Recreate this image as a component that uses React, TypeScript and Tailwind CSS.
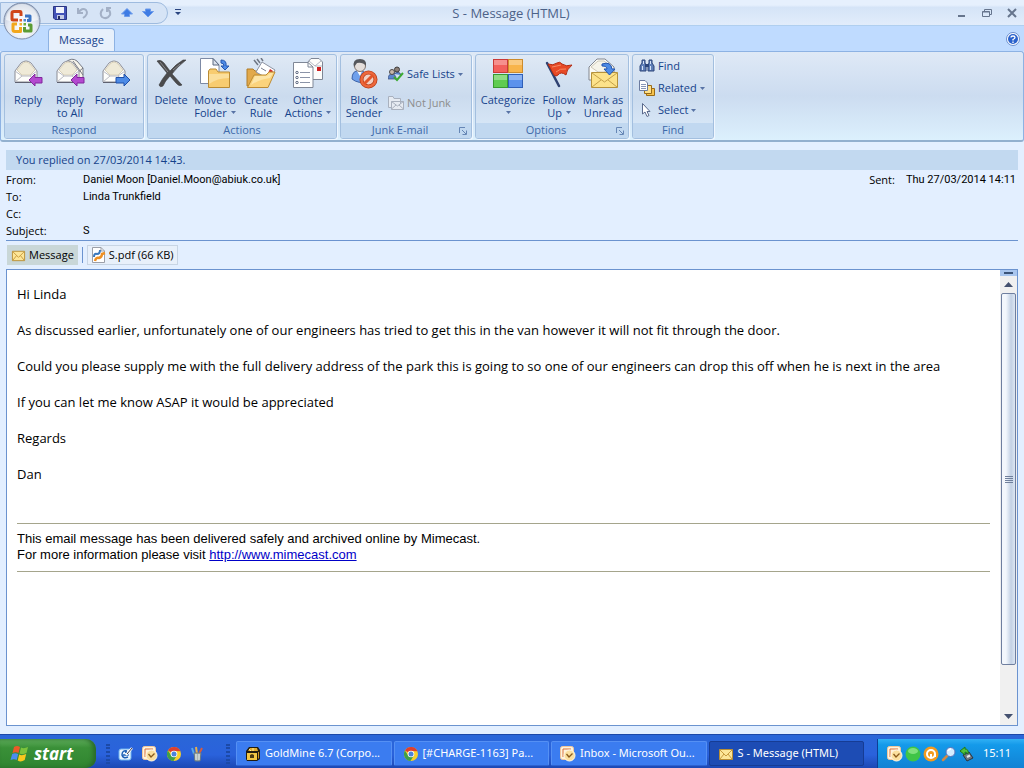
import type { ReactNode } from 'react';

const uiFont = "font-['Open_Sans','Noto_Sans',sans-serif]";

type IconProps = { size?: number };

/* ---------- Ribbon icons (32px) ---------- */

function OpenEnvelope() {
  return (
    <>
      <path d="M3 13 L9 5 Q14 1 19 5 L25 13 V24 H3Z" fill="#fdfdfb" stroke="#8b8c94" />
      <path d="M5 12 L10 6 Q14 2 18 6 L23 12 L18 17 H10Z" fill="#efead8" stroke="#d8d0b8" />
      <path d="M3 13 L10 18 H18 L25 13 M3 24 L10 18 M25 24 L18 18" fill="none" stroke="#b9bac2" />
      <path d="M3 24.500H25" stroke="#5e6170" />
    </>
  );
}

function LeftArrow() {
  return <path d="M17 22 L23 16 V19.500 H30 V25 H23 V28Z" fill="#b44ad0" stroke="#80279c" />;
}

function ReplyIcon() {
  return (
    <svg width="32" height="32" viewBox="0 0 32 32">
      <OpenEnvelope />
      <LeftArrow />
    </svg>
  );
}

function ReplyAllIcon() {
  return (
    <svg width="32" height="32" viewBox="0 0 32 32">
      <path d="M12 4 Q18 -1 23 3 L29 10 V22 H14Z" fill="#f7f4ea" stroke="#777a84" />
      <path d="M19 3 L29 17 M29 10 L22 16" stroke="#777a84" fill="none" />
      <OpenEnvelope />
      <LeftArrow />
    </svg>
  );
}

function ForwardIcon() {
  return (
    <svg width="32" height="32" viewBox="0 0 32 32">
      <OpenEnvelope />
      <path d="M30 22 L24 16 V19.500 H16 V25 H24 V28Z" fill="#4d8be6" stroke="#1f4fa8" />
    </svg>
  );
}

function DeleteIcon() {
  return (
    <svg width="32" height="32" viewBox="0 0 32 32">
      <path d="M2 3 Q6 1 9 5 L15 13 Q21 6 28 2 L31 2 Q22 9 17 16 L27 27 Q24 29 21 25 L15 18 Q10 23 8 28 Q5 30 4 27 Q7 21 12 15 L7 9Z" fill="#4b4b4d" stroke="#3a3a3c" strokeWidth=".6" />
      <path d="M5 4 L13 14 M18 12 L25 6" stroke="#8a8a8d" />
    </svg>
  );
}

function MoveIcon() {
  return (
    <svg width="32" height="32" viewBox="0 0 32 32">
      <path d="M1.500 .5 H14 L20 7 V25.500 H1.500Z" fill="#fff" stroke="#7d8aa5" />
      <path d="M14 .5 V7 H20Z" fill="#dbe2ee" stroke="#5b6880" />
      <path d="M9.500 13 L11 11 H17 L19 14 H30.500 V29.500 H9.500Z" fill="#f8cc70" stroke="#b98b34" />
      <path d="M10 16 H30 V20 Q18 20 10 26Z" fill="#fbdf9c" />
      <path d="M22 2 Q28 2 27 8 H30 L26 12 L22 8 H25 Q25 5 22 5Z" fill="#4d8be6" stroke="#2457b0" />
    </svg>
  );
}

function RuleIcon() {
  return (
    <svg width="32" height="32" viewBox="0 0 32 32">
      <path d="M9 2 L13 7 M12 1 L15 5 M16 0 L18 3" stroke="#6f7684" strokeWidth="1.500" />
      <path d="M2 11 H8 L10 13 H16 V28 H2Z" fill="#e2a94b" stroke="#b07c28" />
      <path d="M17 4 L30 12 L25 22 L11 14Z" fill="#fff" stroke="#8d93a3" />
      <path d="M16 10 L21 13" stroke="#7a8193" />
      <path d="M25 11 l3 2 -1.500 3 -3 -2Z" fill="#cf2a2a" />
      <path d="M9 17 H21 L24 14 H30 L23 29.500 H2.500Z" fill="#fbd37c" stroke="#bc8b35" />
      <path d="M10 18 H22 L25 15 H28 L25 20 Q15 21 6 27Z" fill="#fde5a8" />
    </svg>
  );
}

function OtherIcon() {
  return (
    <svg width="32" height="32" viewBox="0 0 32 32">
      <path d="M15 5 L19 .5 H27 L30.500 4 V21.500 H15Z" fill="#fdfdfb" stroke="#7f8796" />
      <path d="M17 3 L23 8 L29 3 M23 8 H30" fill="none" stroke="#b4b9c4" />
      <path d="M25 9 h4 v4 h-4Z" fill="#cf2020" />
      <path d="M1.500 4.500 H16 L21 9 V29.500 H1.500Z" fill="#fff" stroke="#7f8796" />
      <path d="M16 4.500 V9 H21" fill="none" stroke="#7f8796" />
      <path d="M8 14.500H18 M8 19.500H18 M8 24.500H18" stroke="#8b94a8" />
      <g fill="#fff" stroke="#5d6880">
        <circle cx="5" cy="14.500" r="1.200" />
        <circle cx="5" cy="19.500" r="1.200" />
        <circle cx="5" cy="24.500" r="1.200" />
      </g>
    </svg>
  );
}

function BlockIcon() {
  return (
    <svg width="32" height="32" viewBox="0 0 32 32">
      <path d="M4 21 Q4 12 11 13 Q20 12 20 24 Q10 26 4 21Z" fill="#6fa0ec" stroke="#3d63a8" />
      <path d="M9 13 L12 18 L14 13Z" fill="#fff" />
      <circle cx="12" cy="8" r="5.500" fill="#e4dedb" stroke="#82746c" />
      <path d="M6 9 Q4 1 12 1 Q19 1 18 8 Q15 4 9 5Z" fill="#55575c" />
      <circle cx="20.500" cy="21.500" r="7" fill="#f3cfc2" stroke="#b53d18" strokeWidth="4" />
      <circle cx="20.500" cy="21.500" r="7" fill="none" stroke="#ee683c" strokeWidth="2.500" />
      <path d="M16 26 L25 17" stroke="#e2552a" strokeWidth="3" />
    </svg>
  );
}

function CategorizeIcon() {
  return (
    <svg width="32" height="32" viewBox="0 0 32 32">
      <rect x="1.500" y="1.500" width="14" height="13" fill="#f2605c" stroke="#c93a38" />
      <rect x="16.500" y="1.500" width="14" height="13" fill="#f8b44a" stroke="#cc8b2c" />
      <rect x="1.500" y="16.500" width="14" height="13" fill="#5fcc50" stroke="#389a30" />
      <rect x="16.500" y="16.500" width="14" height="13" fill="#5c92ec" stroke="#2f5fb8" />
      <path d="M2 2H15V7H2Z M17 2H30V7H17Z M2 17H15V22H2Z M17 17H30V22H17Z" fill="#fff" opacity=".3" />
    </svg>
  );
}

function FlagIcon() {
  return (
    <svg width="32" height="32" viewBox="0 0 32 32">
      <path d="M4 5 L16 28" stroke="#2f4272" strokeWidth="2.500" strokeLinecap="round" />
      <path d="M5 6 Q10 8 14 5 Q17 3 19 6 Q23 9 29 7 Q23 12 23 17 Q18 13 15 17 Q13 19 11 17Z" fill="#e84a26" stroke="#b32c12" />
      <path d="M9 9 Q14 8 18 7 M13 14 Q17 10 23 11" fill="none" stroke="#f58b66" />
    </svg>
  );
}

function UnreadIcon() {
  return (
    <svg width="32" height="32" viewBox="0 0 32 32">
      <path d="M2 9 L10 1 H18 L27 9 V22 H2Z" fill="#fbfbf6" stroke="#82868f" />
      <path d="M4 9 L11 3 H17 L25 9 L17 14 H11Z" fill="#f6f4ea" stroke="#cfc9b8" />
      <path d="M4.500 14.500 H30.500 V29.500 H4.500Z" fill="#fce28a" stroke="#b5923c" />
      <path d="M5 15 L17.500 24 L30 15 M5 29 L14 22 M30 29 L21 22" fill="none" stroke="#c4a14a" />
      <path d="M15 6 Q24 3 25 11 H28 L22.500 17 L17 11 H20 Q20 8 15 8Z" fill="#4d8be6" stroke="#2355b0" />
    </svg>
  );
}

/* ---------- Small icons (16px) ---------- */

function SafeIcon() {
  return (
    <svg width="16" height="16" viewBox="0 0 16 16">
      <path d="M0 13 Q0 8 4 8 Q8 8 8 13Z" fill="#5b86cf" stroke="#3b4e78" strokeWidth=".7" />
      <circle cx="4" cy="6" r="2.500" fill="#c9b8ac" stroke="#4d4a4a" />
      <circle cx="9" cy="3.500" r="2.500" fill="#8d8078" stroke="#3f3d3d" />
      <path d="M6 8 Q11 4 13 9" fill="#5b86cf" stroke="#3b4e78" />
      <path d="M6 11 L9 14 L15 7" fill="none" stroke="#3caa33" strokeWidth="2" />
    </svg>
  );
}

function NotJunkIcon() {
  return (
    <svg width="16" height="16" viewBox="0 0 16 16" fill="#e6ebf2" stroke="#a9b1be">
      <path d="M.5 12.500 V1.500 H5 L6 3.500 H12.500 V12.500Z" />
      <path d="M3.500 6.500 H15.500 V14.500 H3.500Z M3.500 6.500 L9.500 11 L15.500 6.500 M3.500 14 L8 10 M15.500 14 L11 10" />
    </svg>
  );
}

function FindIcon() {
  return (
    <svg width="16" height="16" viewBox="0 0 16 16">
      <path d="M3 2 H6 V5 L7 7 V13 H1 V8 L3 5Z M10 2 H13 V5 L15 8 V13 H9 V7 L10 5Z" fill="#5f7fb8" stroke="#2c4478" />
      <path d="M6 6 H10 V9 H6Z" fill="#2c467c" />
      <path d="M3.500 8 V12 M11.500 8 V12 M4.500 3 V6 M11.500 3 V6" stroke="#d5e2f7" />
    </svg>
  );
}

function RelatedIcon() {
  return (
    <svg width="16" height="16" viewBox="0 0 16 16">
      <path d="M7.500 8.500 H15.500 V15.500 H7.500Z" fill="#f6c24c" stroke="#9a6b16" />
      <path d="M5.500 5.500 H12.500 V13.500 H5.500Z" fill="#fde08c" stroke="#9a6b16" />
      <path d="M.5 .5 H6 L8.500 3 V10.500 H.5Z" fill="#fff" stroke="#6b7ba0" />
      <path d="M2 4.500H7 M2 6.500H7 M2 8.500H7" stroke="#8796b8" />
    </svg>
  );
}

function CursorIcon() {
  return (
    <svg width="16" height="16" viewBox="0 0 16 16">
      <path d="M3.500 1.500 V12 L6 10 L8 14.500 L10 13.500 L8 9.500 H11Z" fill="#fff" stroke="#5a6a8c" />
    </svg>
  );
}

function MailIcon({ size = 16 }: IconProps) {
  return (
    <svg width={size} height={size} viewBox="0 0 16 16">
      <path d="M1.500 3.500 H14.500 V13.500 H1.500Z" fill="#fde698" stroke="#b98e35" />
      <path d="M2 4 L8 10 L14 4 M2 13 L6 8 M14 13 L10 8" fill="none" stroke="#c79b3e" />
    </svg>
  );
}

function PdfIcon() {
  return (
    <svg width="16" height="16" viewBox="0 0 16 16">
      <path d="M1.500 .5 H10 L13.500 4 V15.500 H1.500Z" fill="#fff" stroke="#9b9fa8" />
      <path d="M10 .5 V4 H13.500" fill="none" stroke="#9b9fa8" />
      <path d="M3 10 Q3 6 6 7 Q9 7 9 3" fill="none" stroke="#3b78bd" strokeWidth="2" />
      <path d="M4 14 Q5 10 8 11 Q11 10 11 7 L14 6" fill="none" stroke="#ee8f22" strokeWidth="2.500" />
    </svg>
  );
}

function OutlookIcon() {
  return (
    <svg width="16" height="16" viewBox="0 0 16 16">
      <rect x=".5" y=".5" width="13" height="13" rx="2" fill="#fff3dc" stroke="#f3c79a" />
      <path d="M3 11 V3 H11" fill="none" stroke="#d9713c" />
      <circle cx="9.500" cy="9.500" r="5.500" fill="#fbdf9e" stroke="#fff7e6" />
      <path d="M6.500 8 L9 11 L12.500 7.500" fill="none" stroke="#8a5a1c" strokeWidth="1.300" />
    </svg>
  );
}

function ChromeIcon() {
  return (
    <svg width="16" height="16" viewBox="0 0 16 16">
      <circle cx="8" cy="8" r="7" fill="#f7cf2e" />
      <path d="M8 8 L2 4.400 A7 7 0 0 1 14.500 5.200 L8 5Z" fill="#dd4030" />
      <path d="M1.900 4.500 A7 7 0 0 0 7.500 15 L10.500 10 L5.500 10Z" fill="#3f9f48" />
      <circle cx="8" cy="8" r="3.300" fill="#fff" />
      <circle cx="8" cy="8" r="2.500" fill="#4a83dc" />
    </svg>
  );
}

function ShowDesktopIcon() {
  return (
    <svg width="16" height="16" viewBox="0 0 16 16">
      <rect x="1" y="3" width="12" height="11" rx="2" fill="#e9f5ff" stroke="#6db2ee" />
      <path d="M9 5 Q4 4 4 9 Q5 13 10 11 M5 9 H10 Q10 6 7 6" fill="none" stroke="#1c5fb5" strokeWidth="1.500" />
      <path d="M8 9 L14 2" stroke="#fff" strokeWidth="2.500" />
      <path d="M9 8 L14 2" stroke="#3c3c48" />
    </svg>
  );
}

function PencilsIcon() {
  return (
    <svg width="16" height="16" viewBox="0 0 16 16">
      <path d="M4 8 L2 2" stroke="#57a8e8" strokeWidth="2" />
      <path d="M7 8 L6 1" stroke="#e8b04a" strokeWidth="2" />
      <path d="M9 8 L12 2" stroke="#d85c3c" strokeWidth="2" />
      <path d="M4 7 H11 L10 15 H5Z" fill="#aab4b4" stroke="#697a80" />
      <path d="M6 8 V14 M9 8 V14" stroke="#e5eded" />
    </svg>
  );
}

function GoldMineIcon() {
  return (
    <svg width="16" height="16" viewBox="0 0 16 16">
      <path d="M1 5 L4 1 H13 L15 4 V13 L12 15 H2 L1 13Z" fill="#221c10" />
      <path d="M3 5 L5 2 H12 L13 5Z" fill="#e0ad32" />
      <path d="M4 3 L6 5 M8 2 V5" stroke="#fff0a0" />
      <path d="M2 7 H12 V14 H2Z" fill="#f3c744" />
      <path d="M13 6 H14 V12 L13 13Z" fill="#c99426" />
      <path d="M5 12 V9 L7 8 L9 9 V12Z" fill="#4c3a12" />
    </svg>
  );
}

function AvastIcon() {
  return (
    <svg width="16" height="16" viewBox="0 0 16 16">
      <circle cx="8" cy="8" r="7.500" fill="#f39a1e" />
      <circle cx="8" cy="8" r="4" fill="none" stroke="#fff" strokeWidth="2" />
      <path d="M8 8 V12 M12 8 V11" stroke="#fff" strokeWidth="2" />
    </svg>
  );
}

function MagnifierIcon() {
  return (
    <svg width="16" height="16" viewBox="0 0 16 16">
      <path d="M6 10 L2 14" stroke="#cf8a48" strokeWidth="2.500" strokeLinecap="round" />
      <circle cx="9.500" cy="6" r="4.500" fill="#d5ecff" stroke="#5670b8" />
      <path d="M7 5 Q8 3 10 3" stroke="#fff" strokeWidth="1.500" fill="none" />
    </svg>
  );
}

function UsbIcon() {
  return (
    <svg width="16" height="16" viewBox="0 0 16 16">
      <path d="M4 9 L10 6 L14 12 L8 15Z" fill="#6d7680" stroke="#2d343c" />
      <path d="M8 11 L11 9.500" stroke="#e3e8ed" strokeWidth="2" />
      <path d="M1 5 L6 1 V3 Q10 3 9 8 Q7 6 6 6 V9Z" fill="#4fc23c" stroke="#1f7a1a" />
    </svg>
  );
}

function WindowsFlag() {
  return (
    <svg width="20" height="18" viewBox="0 0 20 18">
      <path d="M4 2 Q7 0 10 2 L8.500 8 Q6 6.500 2.500 8Z" fill="#ec5a28" />
      <path d="M11 2.500 Q14 4 18 2 L16.500 8 Q13 10 9.500 8.500Z" fill="#7cc33c" />
      <path d="M2.200 9 Q5 7.500 8.200 9 L6.700 15 Q4 13.500 .5 15Z" fill="#4a8df0" />
      <path d="M9.200 9.500 Q12 11 16.200 9 L14.700 15 Q11 17.500 7.700 15.500Z" fill="#f9c81e" />
    </svg>
  );
}

function OfficeLogo() {
  return (
    <svg width="38" height="38" viewBox="0 0 38 38">
      <defs>
        <radialGradient id="orb" cx="50%" cy="70%" r="65%">
          <stop offset="0" stopColor="#ffffff" />
          <stop offset=".6" stopColor="#e4e9f2" />
          <stop offset="1" stopColor="#b3bfd3" />
        </radialGradient>
      </defs>
      <circle cx="19" cy="19" r="18" fill="url(#orb)" stroke="#7d8ca8" />
      <path d="M3 18 A16 16 0 0 1 35 18 Q19 23 3 18Z" fill="#fff" opacity=".55" />
      <g fill="none" strokeWidth="3" strokeLinejoin="round">
        <path d="M15 18 H10 Q9 18 9 17 V11 Q9 9.500 11 9.500 H17 Q18 9.500 18 11 V14" stroke="#cf4519" />
        <path d="M22 14 H27 V18.500 H24" stroke="#3a74c4" />
        <path d="M14 22 H10 V28 Q10 29.500 12 29.500 H17.500 V25" stroke="#f2a71d" />
        <path d="M21.500 25 V29 H28 V23 H25" stroke="#5c9c34" />
      </g>
      <path d="M16.500 17h2.500v2.500h-2.500z" fill="#e2602c" />
      <path d="M20.500 17h2.500v2.500h-2.500z" fill="#4c85d0" />
      <path d="M16.500 21h2.500v2.500h-2.500z" fill="#f2b32d" />
      <path d="M20.500 21h2.500v2.500h-2.500z" fill="#6cae3c" />
    </svg>
  );
}

/* ---------- Building blocks ---------- */

function Caret() {
  return (
    <svg width="5" height="3" viewBox="0 0 5 3" className="inline-block shrink-0">
      <path d="M0 0H5L2.500 3Z" fill="#5873a5" />
    </svg>
  );
}

function BigButton({ icon, lines, caret, width }: { icon: ReactNode; lines: string[]; caret?: boolean; width: string }) {
  return (
    <button className={`${width} shrink-0 flex flex-col items-center pt-[3px] text-[11px] leading-[13px] text-[#15428b]`}>
      <span className="h-8 mb-[3px]">{icon}</span>
      {lines.map((line, i) => (
        <span key={i} className="h-[13px] flex items-center gap-1 whitespace-nowrap">
          {line}
          {caret && i === lines.length - 1 && <Caret />}
        </span>
      ))}
    </button>
  );
}

function SmallButton({ icon, label, caret, disabled }: { icon: ReactNode; label: string; caret?: boolean; disabled?: boolean }) {
  return (
    <button
      disabled={disabled}
      className="h-[22px] flex items-center gap-[3px] text-[11px] text-[#15428b] whitespace-nowrap disabled:text-[#8d8d8d]"
    >
      {icon}
      {label}
      {caret && <Caret />}
    </button>
  );
}

function Group({ title, launcher, children }: { title: string; launcher?: boolean; children: ReactNode }) {
  return (
    <section className="shrink-0 h-[85px] flex flex-col overflow-hidden rounded-[3px] border border-[#a3bfdf] bg-linear-to-b from-[#dfe9f5] via-[#cbdbee] to-[#dcebfa] shadow-[1px_1px_0_#f0f7ff]">
      <div className="flex-1 flex px-[3px]">{children}</div>
      <div className="h-[15px] flex items-center bg-[#c1d8f0] text-[11px] text-[#3e6aaa]">
        <h2 className="flex-1 text-center">{title}</h2>
        {launcher && (
          <button aria-label={`${title} settings`} className="pr-1">
            <svg width="8" height="8" viewBox="0 0 8 8" fill="none" stroke="#6686b5">
              <path d="M.5 6V.5H6 M3 3L7 7 M7.500 3.500V7.500H3.500" />
            </svg>
          </button>
        )}
      </div>
    </section>
  );
}

function TitleBar() {
  return (
    <header className="h-[26px] flex items-center bg-linear-to-b from-[#e6f0fd] from-20% via-[#d5e4f7] via-30% to-[#e2edfb] border-b border-[#b0cfef]">
      <div className="w-[168px] h-[22px] pl-[52px] pr-[13px] flex items-center justify-between rounded-r-full border border-[#9ebbdf] bg-[#d6e4f6]">
        <button aria-label="Save">
          <svg width="14" height="14" viewBox="0 0 14 14">
            <path d="M.5 .5H13.500V13.500H2L.5 12Z" fill="#4353b8" stroke="#2b3683" />
            <path d="M3 1H11V7H3Z" fill="#f1f4fc" />
            <path d="M4 9H11V13H4Z" fill="#c4cbe5" />
            <path d="M5 10H7V13H5Z" fill="#242c60" />
          </svg>
        </button>
        <button aria-label="Undo">
          <svg width="13" height="14" viewBox="0 0 13 14" fill="none" stroke="#a3b0c6" strokeWidth="2">
            <path d="M2 2V7H7 M2 7Q6 1 10 4Q13 8 7 12" />
          </svg>
        </button>
        <button aria-label="Redo">
          <svg width="13" height="14" viewBox="0 0 13 14" fill="none" stroke="#a3b0c6" strokeWidth="2">
            <path d="M8 2H12 M8 1V6 M8 3Q12 5 11 9Q8 14 3 11Q0 7 4 3" />
          </svg>
        </button>
        <button aria-label="Previous item">
          <svg width="12" height="10" viewBox="0 0 12 10">
            <path d="M6 .5L11.500 6H8.500V8.500H3.500V6H.5Z" fill="#3f7ce4" stroke="#6c9bea" />
          </svg>
        </button>
        <button aria-label="Next item">
          <svg width="12" height="10" viewBox="0 0 12 10">
            <path d="M6 9L.5 3.500H3.500V1H8.500V3.500H11.500Z" fill="#3f7ce4" stroke="#6c9bea" />
          </svg>
        </button>
      </div>
      <button aria-label="Customize toolbar" className="ml-[7px]">
        <svg width="6" height="7" viewBox="0 0 6 7" fill="#2a4580">
          <path d="M0 0H6V1H0Z M0 3H6L3 6Z" />
        </svg>
      </button>
      <h1 className="flex-1 pt-[2px] pr-[116px] text-center text-[13px] text-[#4c6288]">S - Message (HTML)</h1>
      <div className="flex items-center gap-[15px] pr-[7px]">
        <button aria-label="Minimize">
          <svg width="10" height="10" viewBox="0 0 10 10"><path d="M1 7H8V9H1Z" fill="#66758d" /></svg>
        </button>
        <button aria-label="Restore">
          <svg width="10" height="10" viewBox="0 0 10 10" fill="none" stroke="#66758d">
            <path d="M2.500 3V1.500H9.500V6.500H8 M.5 3.500H7.500V8.500H.5Z M.5 4H7.500" />
          </svg>
        </button>
        <button aria-label="Close">
          <svg width="10" height="10" viewBox="0 0 10 10"><path d="M1 1L9 9M9 1L1 9" stroke="#66758d" strokeWidth="2" /></svg>
        </button>
      </div>
    </header>
  );
}

function Ribbon() {
  return (
    <>
      <nav className="h-[25px] flex items-end justify-between bg-[#bfdbff] pl-12 pr-1">
        <button className="h-[23px] px-[10px] rounded-t-[4px] border border-b-0 border-[#8db2e3] bg-[#e7f0fb] text-[11px] text-[#15428b]">
          Message
        </button>
        <button aria-label="Help" className="self-center">
          <svg width="14" height="14" viewBox="0 0 14 14">
            <circle cx="7" cy="7" r="6.500" fill="#fff" stroke="#6b8fce" />
            <circle cx="7" cy="7" r="5" fill="#2a62cc" />
            <path d="M5 5.500Q5 4 7 4Q9 4 9 5.500Q9 6.500 7 7.500V8.500 M7 9.500V11" fill="none" stroke="#fff" strokeWidth="1.300" />
          </svg>
        </button>
      </nav>
      <div className="h-[91px] px-[3px] pt-[2px] flex gap-[3px] border border-b-2 border-[#8db2e3] border-b-[#92b0cf] rounded-[3px] bg-linear-to-b from-[#dfe9f6] via-[#ccdcf0] to-[#dcf0fd]">
        <Group title="Respond">
          <BigButton width="w-10" icon={<ReplyIcon />} lines={['Reply']} />
          <BigButton width="w-11" icon={<ReplyAllIcon />} lines={['Reply', 'to All']} />
          <BigButton width="w-12" icon={<ForwardIcon />} lines={['Forward']} />
        </Group>
        <Group title="Actions">
          <BigButton width="w-10" icon={<DeleteIcon />} lines={['Delete']} />
          <BigButton width="w-12" icon={<MoveIcon />} lines={['Move to', 'Folder']} caret />
          <BigButton width="w-11" icon={<RuleIcon />} lines={['Create', 'Rule']} />
          <BigButton width="w-[50px]" icon={<OtherIcon />} lines={['Other', 'Actions']} caret />
        </Group>
        <Group title="Junk E-mail" launcher>
          <BigButton width="w-10" icon={<BlockIcon />} lines={['Block', 'Sender']} />
          <div className="w-[84px] pl-1 pt-2 flex flex-col gap-[7px]">
            <SmallButton icon={<SafeIcon />} label="Safe Lists" caret />
            <SmallButton icon={<NotJunkIcon />} label="Not Junk" disabled />
          </div>
        </Group>
        <Group title="Options" launcher>
          <BigButton width="w-[58px]" icon={<CategorizeIcon />} lines={['Categorize', '']} caret />
          <BigButton width="w-11" icon={<FlagIcon />} lines={['Follow', 'Up']} caret />
          <BigButton width="w-11" icon={<UnreadIcon />} lines={['Mark as', 'Unread']} />
        </Group>
        <Group title="Find">
          <div className="w-[74px] pl-[3px] flex flex-col">
            <SmallButton icon={<FindIcon />} label="Find" />
            <SmallButton icon={<RelatedIcon />} label="Related" caret />
            <SmallButton icon={<CursorIcon />} label="Select" caret />
          </div>
        </Group>
      </div>
    </>
  );
}

const headers = [
  { label: 'From:', value: 'Daniel Moon [Daniel.Moon@abiuk.co.uk]' },
  { label: 'To:', value: 'Linda Trunkfield' },
  { label: 'Cc:', value: '' },
  { label: 'Subject:', value: 'S' },
];

function MessageHeader() {
  return (
    <div className="pt-2 px-[6px] text-[11px] text-black">
      <p className="h-5 px-[10px] flex items-center bg-[#c2d9f0] text-[#15428b]">You replied on 27/03/2014 14:43.</p>
      <div className="flex justify-between items-start pt-px pb-px border-b border-[#6b93cf]">
        <dl>
          {headers.map(({ label, value }) => (
            <div key={label} className="flex h-[17px] leading-[17px]">
              <dt className="w-[77px]">{label}</dt>
              <dd className="font-['Roboto','Noto_Sans',sans-serif]">{value}</dd>
            </div>
          ))}
        </dl>
        <dl className="flex gap-[11px] leading-[17px] pr-[2px]">
          <dt>Sent:</dt>
          <dd className="font-['Roboto','Noto_Sans',sans-serif]">Thu 27/03/2014 14:11</dd>
        </dl>
      </div>
      <div className="flex items-center gap-1 py-1 pl-px">
        <button className="h-5 px-1 flex items-center gap-[3px] bg-[#c9d7d8]">
          <MailIcon size={15} />
          Message
        </button>
        <span className="w-px h-4 bg-[#6b93cf]" />
        <button className="h-5 px-[3px] flex items-center gap-[2px] border border-[#c8d5e4] bg-[#e8f0fa]">
          <PdfIcon />
          S.pdf (66 KB)
        </button>
      </div>
    </div>
  );
}

const paragraphs = [
  'Hi Linda',
  'As discussed earlier, unfortunately one of our engineers has tried to get this in the van however it will not fit through the door.',
  'Could you please supply me with the full delivery address of the park this is going to so one of our engineers can drop this off when he is next in the area',
  'If you can let me know ASAP it would be appreciated',
  'Regards',
  'Dan',
];

function MessageBody() {
  return (
    <main className="flex-1 flex mx-[6px] mb-2 border border-[#6b93cf] bg-white">
      <article className="flex-1 px-[10px] pt-[15px] text-black">
        <div className="flex flex-col gap-[18px] text-[13px] leading-[18px]">
          {paragraphs.map(text => (
            <p key={text}>{text}</p>
          ))}
        </div>
        <div className="mt-10 pt-[7px] pb-2 border-y border-[#a5a58c] font-['Liberation_Sans',sans-serif] text-[13px] leading-4">
          <p>This email message has been delivered safely and archived online by Mimecast.</p>
          <p>
            For more information please visit{' '}
            <a href="http://www.mimecast.com" className="text-[#0000c8] underline">http://www.mimecast.com</a>
          </p>
        </div>
      </article>
      <div className="w-[17px] flex flex-col items-center bg-[#f0f0f0]">
        <div className="w-full h-[6px] flex items-center justify-center bg-[#a9c6ee]">
          <span className="w-[9px] h-[2px] bg-[#3b5478]" />
        </div>
        <button aria-label="Scroll up" className="h-[17px] shrink-0">
          <svg width="9" height="5" viewBox="0 0 9 5"><path d="M0 5H9L4.500 0Z" fill="#43506e" /></svg>
        </button>
        <div className="w-[15px] flex-[372] flex flex-col items-center justify-center gap-px rounded-[2px] border border-[#6f7f9f] bg-linear-to-r from-[#f3f7fc] from-30% via-[#c3d1e4] via-70% to-[#dde7f3]">
          <span className="w-2 h-px bg-[#70809c]" />
          <span className="w-2 h-px bg-[#70809c]" />
          <span className="w-2 h-px bg-[#70809c]" />
          <span className="w-2 h-px bg-[#70809c]" />
        </div>
        <div className="flex-[43]" />
        <button aria-label="Scroll down" className="h-[17px] shrink-0">
          <svg width="9" height="5" viewBox="0 0 9 5"><path d="M0 0H9L4.500 5Z" fill="#43506e" /></svg>
        </button>
      </div>
    </main>
  );
}

function Grip() {
  return <span className="w-1 h-5 border-x-2 border-dotted border-[#1c4aa8]" />;
}

const tasks = [
  { label: 'GoldMine 6.7 (Corpo...', icon: <GoldMineIcon /> },
  { label: '[#CHARGE-1163] Pa...', icon: <ChromeIcon /> },
  { label: 'Inbox - Microsoft Ou...', icon: <OutlookIcon /> },
  { label: 'S - Message (HTML)', icon: <MailIcon />, active: true },
];

function Taskbar() {
  return (
    <footer className="h-[34px] flex items-stretch pt-1 border-t border-[#1c48a8] bg-linear-to-b from-[#2a66d8] from-5% via-[#2a62dc] via-60% to-[#1c48b4] text-white text-[11px] font-['Noto_Sans',sans-serif]">
      <button className="w-24 pl-[10px] flex items-center gap-1 rounded-r-[10px] bg-linear-to-b from-[#5fae5c] via-[#3a9038] via-30% to-[#2f8530] shadow-[inset_-3px_0_4px_#2a6a2a] text-[17px] leading-5 font-bold italic">
        <WindowsFlag />
        start
      </button>
      <div className="flex items-center gap-2 pl-[10px]">
        <Grip />
        <button aria-label="Show desktop"><ShowDesktopIcon /></button>
        <button aria-label="Outlook"><OutlookIcon /></button>
        <button aria-label="Chrome"><ChromeIcon /></button>
        <button aria-label="Paint"><PencilsIcon /></button>
      </div>
      <div className="flex items-center pl-5 pr-[6px]"><Grip /></div>
      <div className="flex-1 flex items-center gap-[2px] pr-[13px]">
        {tasks.map(({ label, icon, active }) => (
          <button
            key={label}
            className={`h-[25px] flex-1 min-w-0 pl-2 flex items-center gap-1 rounded-[2px] border whitespace-nowrap ${
              active ? 'bg-[#1d4cb4] border-[#163c94]' : 'bg-[#3b7cf0] border-[#5590f4] border-b-[#2d62d0]'
            }`}
          >
            {icon}
            {label}
          </button>
        ))}
      </div>
      <div className="w-[147px] pl-[9px] flex items-center gap-[2px] border-l border-[#0d3f95] bg-linear-to-b from-[#2fb0f4] via-[#149aea] via-20% to-[#1282d4]">
        <OutlookIcon />
        <svg width="16" height="16" viewBox="0 0 16 16">
          <circle cx="8" cy="8" r="7.500" fill="#3fc447" />
          <ellipse cx="8" cy="5" rx="5" ry="3" fill="#7fe07c" />
        </svg>
        <AvastIcon />
        <MagnifierIcon />
        <UsbIcon />
        <time className="ml-[6px]">15:11</time>
      </div>
    </footer>
  );
}

export default function App() {
  return (
    <div className={`relative min-h-screen flex flex-col bg-[#e3efff] ${uiFont}`}>
      <TitleBar />
      <button aria-label="Office menu" className="absolute left-[3px] top-[2px]">
        <OfficeLogo />
      </button>
      <Ribbon />
      <MessageHeader />
      <MessageBody />
      <Taskbar />
    </div>
  );
}
